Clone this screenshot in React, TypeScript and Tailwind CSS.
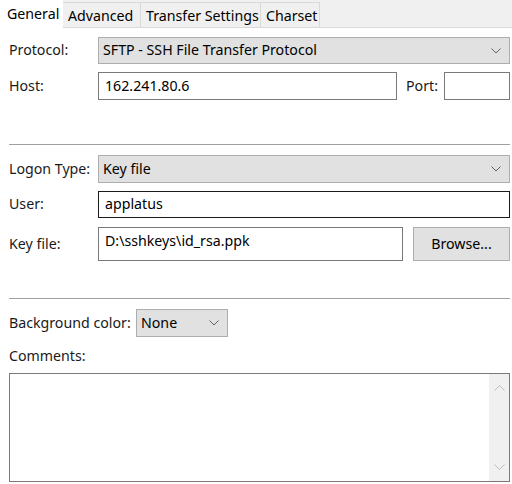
import React from 'react';

const font = { fontFamily: '"Segoe UI", "Noto Sans", "Open Sans", sans-serif' };

function Chevron() {
  return (
    <svg width="10" height="6" viewBox="0 0 10 6" className="shrink-0">
      <path d="M0.5 0.5 L5 5 L9.5 0.5" fill="none" stroke="#606060" strokeWidth="1" />
    </svg>
  );
}

function Select({ value, className }: { value: string; className: string }) {
  return (
    <div className={`flex items-center justify-between border border-[#adadad] bg-[#e1e1e1] pl-[4px] pr-[8px] ${className}`}>
      <span>{value}</span>
      <Chevron />
    </div>
  );
}

function Label({ children, className = '' }: { children: React.ReactNode; className?: string }) {
  return <span className={`whitespace-nowrap text-[#1a1a1a] ${className}`}>{children}</span>;
}

export default function App() {
  const tabs = [
    { name: 'Advanced', w: 'w-[78px]' },
    { name: 'Transfer Settings', w: 'w-[120px]' },
    { name: 'Charset', w: 'w-[59px]' },
  ];
  return (
    <div className="w-[512px] h-[484px] bg-white text-[14.2px] leading-none text-black overflow-hidden" style={font}>
      {/* Tab strip */}
      <div className="flex h-[28px] bg-[#f0f0f0] border-b border-[#d9d9d9]">
        <div className="w-[63px] h-[28px] bg-white pl-[7px] pt-[7px] relative z-10">General</div>
        {tabs.map((t) => (
          <div key={t.name} className={`${t.w} mt-[2px] h-[25px] border-r border-t border-[#d9d9d9] pl-[5px] pt-[6px] bg-[#f0f0f0] whitespace-nowrap`}>
            {t.name}
          </div>
        ))}
      </div>

      <div className="pl-[9px] pr-[2px]">
        {/* Protocol */}
        <div className="flex items-center mt-[9px]">
          <Label className="w-[89px]">Protocol:</Label>
          <Select value="SFTP - SSH File Transfer Protocol" className="flex-1 h-[27px]" />
        </div>
        {/* Host / Port */}
        <div className="flex items-center mt-[8px]">
          <Label className="w-[89px]">Host:</Label>
          <div className="w-[299px] h-[28px] border border-[#7a7a7a] flex items-center pl-[6px]">162.241.80.6</div>
          <Label className="ml-[9px] w-[38px]">Port:</Label>
          <div className="flex-1 h-[28px] border border-[#7a7a7a]" />
        </div>

        <div className="h-px bg-[#a0a0a0] mt-[44px]" />

        {/* Logon type */}
        <div className="flex items-center mt-[10px]">
          <Label className="w-[89px]">Logon Type:</Label>
          <Select value="Key file" className="flex-1 h-[28px]" />
        </div>
        {/* User */}
        <div className="flex items-center mt-[8px]">
          <Label className="w-[89px]">User:</Label>
          <div className="flex-1 h-[27px] border border-[#1a1a1a] flex items-center pl-[6px]">applatus</div>
        </div>
        {/* Key file */}
        <div className="flex items-center mt-[9px]">
          <Label className="w-[89px]">Key file:</Label>
          <div className="w-[305px] h-[34px] border border-[#7a7a7a] pl-[6px] pt-[6px]">D:\sshkeys\id_rsa.ppk</div>
          <div className="ml-[10px] flex-1 h-[34px] border border-[#adadad] bg-[#e1e1e1] flex items-center justify-center">Browse...</div>
        </div>

        <div className="h-px bg-[#a0a0a0] mt-[37px]" />

        {/* Background color */}
        <div className="flex items-center mt-[10px]">
          <Label className="w-[127px]">Background color:</Label>
          <Select value="None" className="w-[92px] h-[28px]" />
        </div>
        <div className="mt-[12px]">
          <Label>Comments:</Label>
        </div>
        {/* Comments textarea */}
        <div className="mt-[10px] h-[109px] border border-[#7a7a7a] flex justify-end">
          <div className="w-[20px] bg-[#f0f0f0] flex flex-col items-center justify-between py-[10px]">
            <svg width="11" height="7" viewBox="0 0 11 7">
              <path d="M0.5 6.5 L5.5 1.5 L10.5 6.5" fill="none" stroke="#bdbdbd" strokeWidth="1" />
            </svg>
            <svg width="11" height="7" viewBox="0 0 11 7">
              <path d="M0.5 0.5 L5.5 5.5 L10.5 0.5" fill="none" stroke="#bdbdbd" strokeWidth="1" />
            </svg>
          </div>
        </div>
      </div>
    </div>
  );
}
